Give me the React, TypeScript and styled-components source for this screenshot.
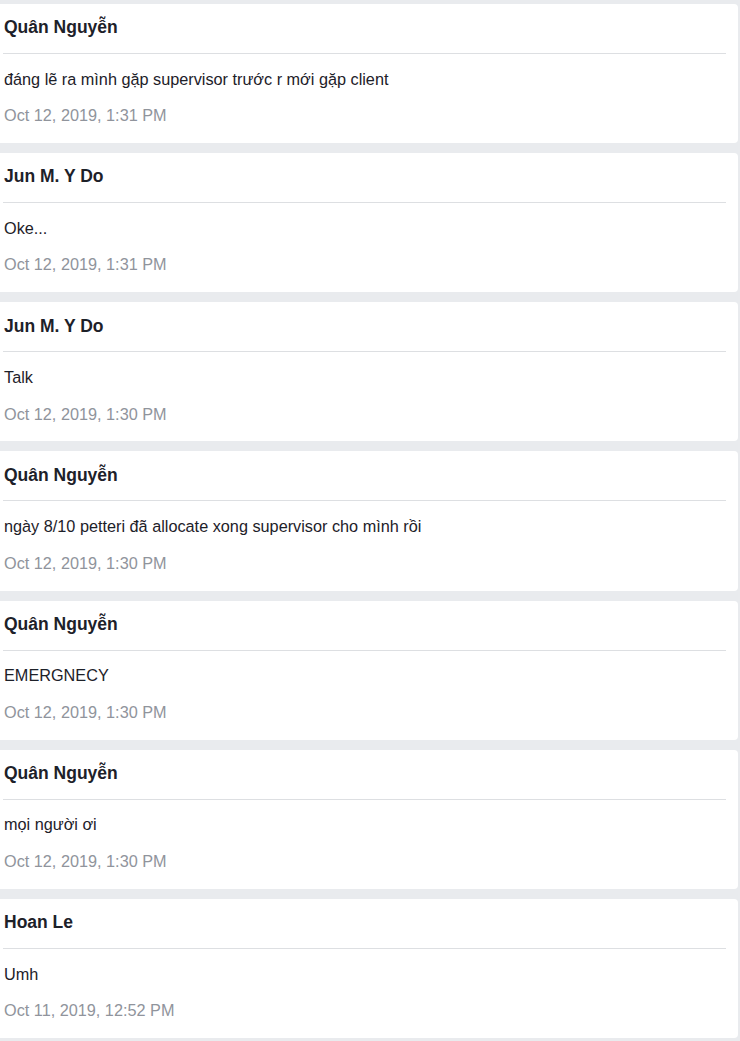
import React from "react";
import styled, { createGlobalStyle } from "styled-components";

const GlobalStyle = createGlobalStyle`
  html, body {
    margin: 0;
    padding: 0;
    background: #e9ebee;
  }
  body {
    font-family: "Liberation Sans", Arial, sans-serif;
    color: #1d2129;
  }
`;

const Feed = styled.div`
  display: flex;
  flex-direction: column;
  gap: 10px;
  padding: 4px 2px 4px 0;
  background: #e9ebee;
  min-height: 1041px;
  box-sizing: border-box;
`;

const Card = styled.article`
  background: #ffffff;
  border-radius: 0 4px 4px 0;
  padding: 0 12px 0 3px;
  height: 139.17px;
  box-sizing: border-box;
`;

const Header = styled.div`
  padding: 13.3px 0 0 1px;
  height: 50px;
  box-sizing: border-box;
  border-bottom: 1px solid #dddfe2;
`;

const Name = styled.div`
  font-size: 17.5px;
  font-weight: 700;
  line-height: 21.12px;
  color: #1d2129;
`;

const Body = styled.div`
  display: flex;
  flex-direction: column;
  gap: 17.4px;
  padding: 15.7px 0 0 1px;
`;

const Message = styled.div`
  font-size: 16.25px;
  line-height: 19.2px;
  color: #1d2129;
`;

const Time = styled.div`
  font-size: 16.25px;
  line-height: 19.2px;
  color: #90949c;
`;

type Post = { name: string; text: string; time: string };

const posts: Post[] = [
  { name: "Quân Nguyễn", text: "đáng lẽ ra mình gặp supervisor trước r mới gặp client", time: "Oct 12, 2019, 1:31 PM" },
  { name: "Jun M. Y Do", text: "Oke...", time: "Oct 12, 2019, 1:31 PM" },
  { name: "Jun M. Y Do", text: "Talk", time: "Oct 12, 2019, 1:30 PM" },
  { name: "Quân Nguyễn", text: "ngày 8/10 petteri đã allocate xong supervisor cho mình rồi", time: "Oct 12, 2019, 1:30 PM" },
  { name: "Quân Nguyễn", text: "EMERGNECY", time: "Oct 12, 2019, 1:30 PM" },
  { name: "Quân Nguyễn", text: "mọi người ơi", time: "Oct 12, 2019, 1:30 PM" },
  { name: "Hoan Le", text: "Umh", time: "Oct 11, 2019, 12:52 PM" },
];

export default function App() {
  return (
    <>
      <GlobalStyle />
      <Feed>
        {posts.map((p, i) => (
          <Card key={i}>
            <Header>
              <Name>{p.name}</Name>
            </Header>
            <Body>
              <Message>{p.text}</Message>
              <Time>{p.time}</Time>
            </Body>
          </Card>
        ))}
      </Feed>
    </>
  );
}
